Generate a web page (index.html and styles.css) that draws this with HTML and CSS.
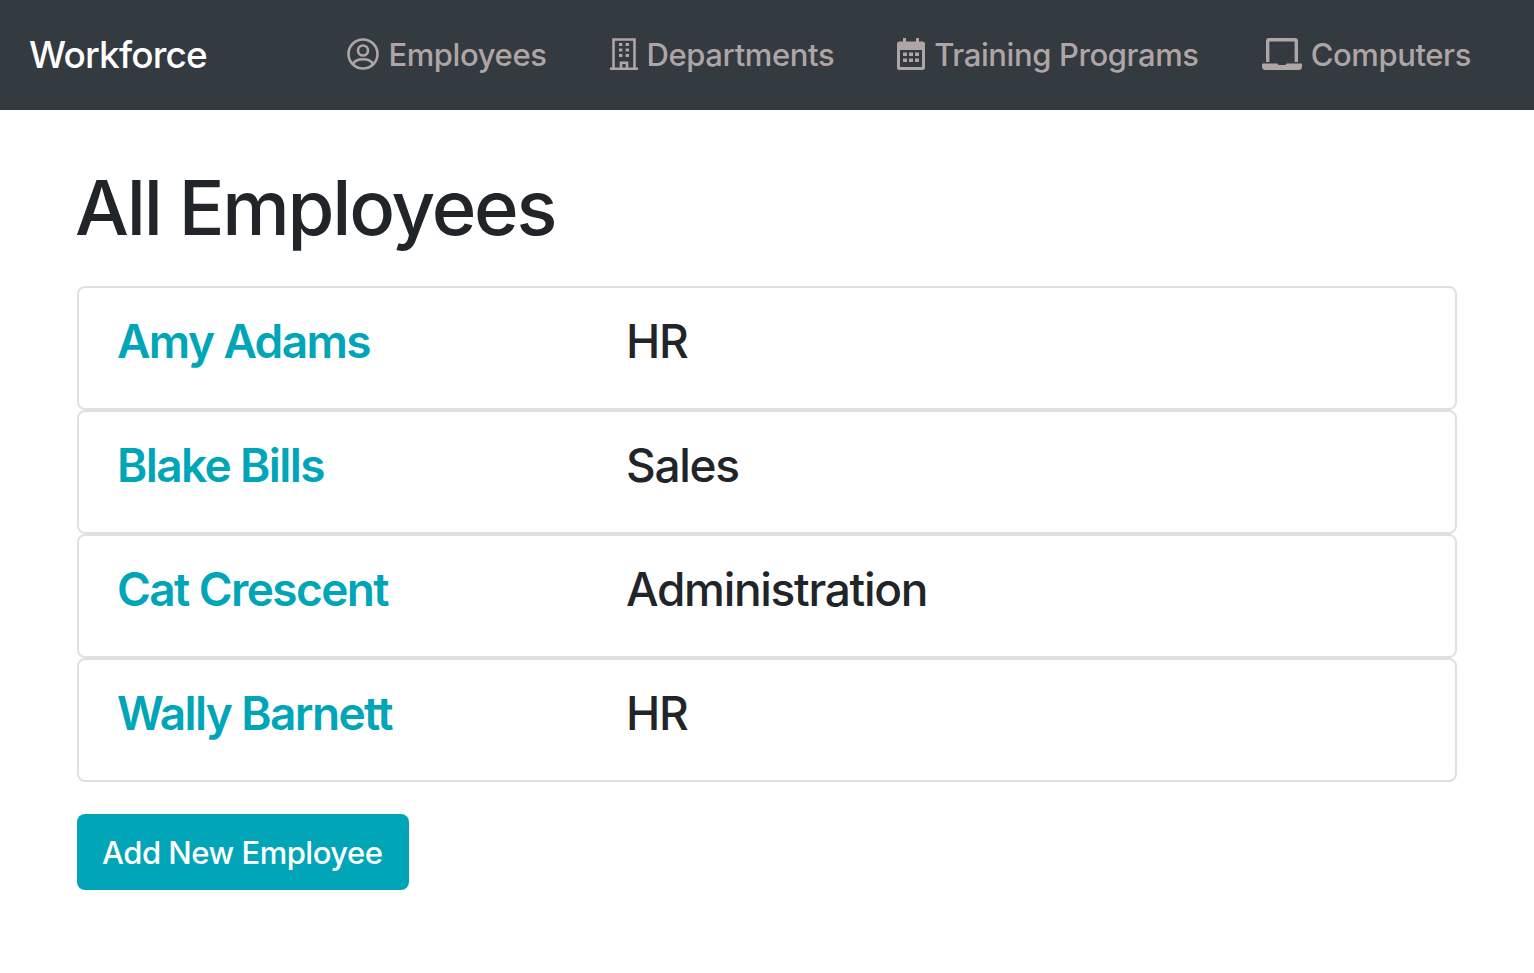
FILE: index.html
```html
<!DOCTYPE html>
<html lang="en">
<head>
  <meta charset="UTF-8">
  <meta name="viewport" content="width=device-width, initial-scale=1.0">
  <title>Workforce</title>
  <link rel="stylesheet" href="styles.css">
</head>
<body>
  <nav class="navbar">
    <a class="brand" href="#">Workforce</a>
    <ul class="nav-links">
      <li><a href="#">
        <svg class="icon icon-round" viewBox="0 0 32 32" fill="none" stroke="currentColor" stroke-width="2.600">
          <circle cx="16" cy="16" r="14.500"/>
          <circle cx="16" cy="12.500" r="5"/>
          <path d="M6 26c2-3.600 5.200-4.800 10-4.800s8 1.200 10 4.800"/>
        </svg>Employees</a></li>
      <li><a href="#">
        <svg class="icon" viewBox="0 0 28 32" fill="none" stroke="currentColor" stroke-width="2.600">
          <path d="M3.500 31V1.500h21V31M0 30.700h28M11 30.700v-6h6v6"/>
          <path stroke-width="3.200" d="M9 6.500h3.400M15.600 6.500H19M9 12h3.400M15.600 12H19M9 17.500h3.400M15.600 17.500H19"/>
        </svg>Departments</a></li>
      <li><a href="#">
        <svg class="icon" viewBox="0 0 28 32" fill="currentColor">
          <path fill-rule="evenodd" d="M6 0h3v3.500h10V0h3v3.500h3.500A2.500 2.500 0 0 1 28 6v23.500a2.500 2.500 0 0 1-2.500 2.500h-23A2.500 2.500 0 0 1 0 29.500V6a2.500 2.500 0 0 1 2.500-2.500H6zM3 12v17h22V12z"/>
          <path d="M6 14.500h4v3.500H6zM12 14.500h4v3.500h-4zM18 14.500h4v3.500h-4zM6 20.500h4V24H6zM12 20.500h4V24h-4zM18 20.500h4V24h-4z"/>
        </svg>Training Programs</a></li>
      <li><a href="#">
        <svg class="icon icon-wide" viewBox="0 0 40 32" fill="currentColor">
          <path fill-rule="evenodd" d="M7 0h26a3 3 0 0 1 3 3v21h-3.400V3.400H7.400V24H4V3a3 3 0 0 1 3-3z"/>
          <path d="M1 25.500h14.500c.4 1 1.200 1.500 2.500 1.500h4c1.300 0 2.100-.5 2.500-1.500H39a1 1 0 0 1 1 1v2a3.500 3.500 0 0 1-3.500 3.500h-33A3.500 3.500 0 0 1 0 28.500v-2a1 1 0 0 1 1-1z"/>
        </svg>Computers</a></li>
    </ul>
  </nav>

  <main class="content">
    <h1>All Employees</h1>
    <div class="employee-list">
      <div class="employee">
        <a class="employee-name" href="#">Amy Adams</a>
        <span class="employee-dept">HR</span>
      </div>
      <div class="employee">
        <a class="employee-name" href="#">Blake Bills</a>
        <span class="employee-dept">Sales</span>
      </div>
      <div class="employee">
        <a class="employee-name" href="#">Cat Crescent</a>
        <span class="employee-dept">Administration</span>
      </div>
      <div class="employee">
        <a class="employee-name" href="#">Wally Barnett</a>
        <span class="employee-dept">HR</span>
      </div>
    </div>
    <a class="btn-add" href="#">Add New Employee</a>
  </main>
</body>
</html>
```

FILE: styles.css
```css
* {
  box-sizing: border-box;
}
body {
  font-family: 'Inter', 'Liberation Sans', sans-serif;
  font-weight: 450;
  margin: 0;
  color: #212529;
  background-color: #ffffff;
}
a {
  text-decoration: none;
}
.navbar {
  display: flex;
  align-items: center;
  justify-content: space-between;
  height: 110px;
  padding: 0 63px 2px 29px;
  background-color: #333a40;
}
.brand {
  color: #ffffff;
  font-size: 37px;
  letter-spacing: -0.8px;
}
.nav-links {
  display: flex;
  gap: 63px;
  list-style: none;
  margin: 0;
  padding: 0;
}
.nav-links a {
  display: flex;
  align-items: center;
  gap: 9px;
  color: #afa5a5;
  font-size: 31px;
  letter-spacing: -0.4px;
}
.icon {
  width: 28px;
  height: 32px;
}
.icon-round {
  width: 32px;
}
.icon-wide {
  width: 40px;
}
.content {
  padding: 53px 77px 0;
}
h1 {
  font-size: 76px;
  font-weight: 450;
  line-height: 88px;
  letter-spacing: -2.200px;
  margin: 0 0 35px -2px;
}
.employee-list {
  display: flex;
  flex-direction: column;
  margin-bottom: 32px;
}
.employee {
  display: grid;
  grid-template-columns: 509px 1fr;
  height: 124px;
  padding: 25px 38px 0;
  border: 2px solid #e0e0e0;
  border-radius: 8px;
  font-size: 46px;
  line-height: 56px;
  letter-spacing: -1.300px;
}
.employee-name {
  color: #00a5b8;
  font-weight: 560;
  letter-spacing: -1.600px;
}
.btn-add {
  display: inline-block;
  padding: 20px 27px 18px 25px;
  border-radius: 8px;
  background-color: #00a5b8;
  color: #ffffff;
  font-size: 31px;
  line-height: 38px;
  letter-spacing: -0.5px;
}
```
